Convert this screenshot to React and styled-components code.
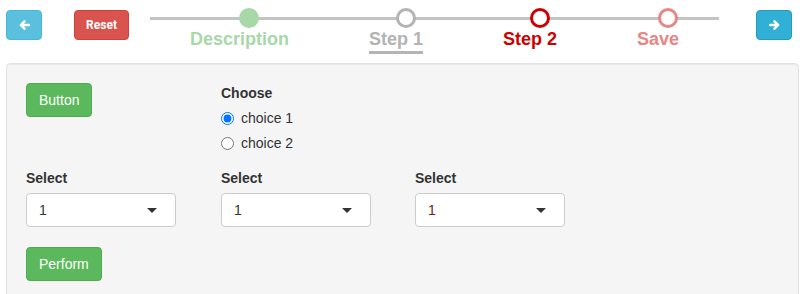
import React from "react";
import styled, { createGlobalStyle } from "styled-components";

const Global = createGlobalStyle`
  html, body { margin: 0; padding: 0; background: #fff; }
  body { font-family: "Liberation Sans", Arial, sans-serif; font-size: 14px; line-height: 20px; color: #333; }
  * { box-sizing: border-box; }
`;

const Header = styled.div`
  display: flex;
  align-items: flex-start;
  height: 63px;
  padding: 8px 6px 0;
`;

const NavButton = styled.button`
  width: 36px;
  height: 30px;
  margin-top: 2px;
  border-radius: 4px;
  border: 1px solid ${(p) => (p.$dark ? "#269abc" : "#46b8da")};
  background: ${(p) => (p.$dark ? "#31b0d5" : "#5bc0de")};
  display: flex;
  align-items: center;
  justify-content: center;
  padding: 0;
  margin-left: ${(p) => p.$ml || 0}px;
`;

const ResetButton = styled.button`
  width: 55px;
  height: 30px;
  margin-top: 2px;
  margin-left: 32px;
  border-radius: 4px;
  border: 1px solid #d43f3a;
  background: #d9534f;
  color: #fff;
  font-family: Roboto, "Liberation Sans", sans-serif;
  font-weight: 700;
  font-size: 12px;
  padding: 0;
`;

const Stepper = styled.div`
  position: relative;
  width: 569px;
  margin-left: 21px;
  display: flex;
  justify-content: space-around;
`;

const Track = styled.div`
  position: absolute;
  left: 0;
  right: 0;
  top: 9px;
  height: 3px;
  background: #c3c3c3;
`;

const Step = styled.div`
  position: relative;
  display: flex;
  flex-direction: column;
  align-items: center;
`;

const Dot = styled.div`
  width: 20px;
  height: 20px;
  margin-left: 20px;
  border-radius: 50%;
  border: 3px solid ${(p) => p.$color};
  background: ${(p) => (p.$filled ? p.$color : "#fff")};
`;

const StepLabel = styled.div`
  margin-top: 1px;
  font-weight: 700;
  font-size: 18px;
  line-height: 20px;
  color: ${(p) => p.$color};
  padding-bottom: 2px;
  border-bottom: 3px solid ${(p) => (p.$active ? "#b5b5b5" : "transparent")};
`;

const Well = styled.div`
  margin: 0 6px;
  min-height: 260px;
  background: #f5f5f5;
  border: 1px solid #e3e3e3;
  border-radius: 4px;
  box-shadow: inset 0 1px 1px rgba(0, 0, 0, 0.05);
  padding: 19px;
`;

const Row = styled.div`
  display: grid;
  grid-template-columns: 195px 194px 195px;
  margin-bottom: ${(p) => p.$mb || 0}px;
`;

const GreenButton = styled.button`
  justify-self: start;
  align-self: start;
  height: 34px;
  padding: 6px 12px;
  border-radius: 4px;
  border: 1px solid #4cae4c;
  background: #5cb85c;
  color: #fff;
  font-family: "Liberation Sans", Arial, sans-serif;
  font-size: 14px;
  line-height: 20px;
`;

const Group = styled.div`
  display: flex;
  flex-direction: column;
`;

const Label = styled.div`
  font-weight: 700;
  margin-bottom: 5px;
`;

const RadioRow = styled.label`
  display: flex;
  align-items: center;
  height: 20px;
  gap: 7px;
  margin-bottom: ${(p) => (p.$last ? 0 : 5)}px;
  input {
    margin: 0;
    width: 13px;
    height: 13px;
  }
`;

const SelectBox = styled.div`
  width: 150px;
  height: 34px;
  background: #fff;
  border: 1px solid #ccc;
  border-radius: 4px;
  display: flex;
  align-items: center;
  justify-content: space-between;
  padding: 0 18px 0 12px;
  color: ${(p) => p.$color || "#333"};
`;

const Caret = styled.span`
  width: 0;
  height: 0;
  border-left: 5px solid transparent;
  border-right: 5px solid transparent;
  border-top: 5px solid #333;
`;

const Arrow = ({ dir }) => (
  <svg width="11" height="10" viewBox="0 0 11 10">
    {dir === "left" ? (
      <path d="M10 5H2M5.5 1.3L1.8 5l3.7 3.7" stroke="#fff" strokeWidth="2.4" fill="none" strokeLinecap="round" strokeLinejoin="round" />
    ) : (
      <path d="M1 5h8M5.5 1.3L9.2 5 5.5 8.7" stroke="#fff" strokeWidth="2.4" fill="none" strokeLinecap="round" strokeLinejoin="round" />
    )}
  </svg>
);

const steps = [
  { label: "Description", color: "#a8d8a8", filled: true },
  { label: "Step 1", color: "#b3b3b3", active: true },
  { label: "Step 2", color: "#cc0000" },
  { label: "Save", color: "#e88585" },
];

export default function App() {
  return (
    <>
      <Global />
      <Header>
        <NavButton>
          <Arrow dir="left" />
        </NavButton>
        <ResetButton>Reset</ResetButton>
        <Stepper>
          <Track />
          {steps.map((s) => (
            <Step key={s.label}>
              <Dot $color={s.color} $filled={s.filled} />
              <StepLabel $color={s.color} $active={s.active}>
                {s.label}
              </StepLabel>
            </Step>
          ))}
        </Stepper>
        <NavButton $dark $ml={37}>
          <Arrow dir="right" />
        </NavButton>
      </Header>
      <Well>
        <Row $mb={15}>
          <GreenButton>Button</GreenButton>
          <Group>
            <Label>Choose</Label>
            <RadioRow>
              <input type="radio" name="c" defaultChecked />
              choice 1
            </RadioRow>
            <RadioRow $last>
              <input type="radio" name="c" />
              choice 2
            </RadioRow>
          </Group>
        </Row>
        <Row $mb={20}>
          {["#333", "#333", "#6e1c1c"].map((c, i) => (
            <Group key={i}>
              <Label>Select</Label>
              <SelectBox $color={c}>
                <span>1</span>
                <Caret />
              </SelectBox>
            </Group>
          ))}
        </Row>
        <GreenButton>Perform</GreenButton>
      </Well>
    </>
  );
}
